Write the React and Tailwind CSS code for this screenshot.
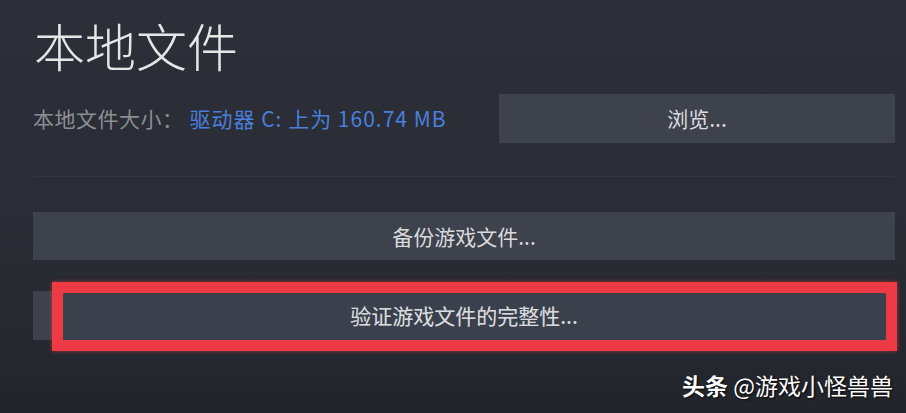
import React from 'react';

const font = { fontFamily: '"Noto Sans CJK SC", "Noto Sans", sans-serif' };

const ActionButton = ({ children, className = '' }) => (
  <div
    className={`flex items-center justify-center bg-[#3e424c] text-[21px] text-[#d9dadd] leading-none ${className}`}
  >
    {children}
  </div>
);

const App = () => {
  return (
    <div
      className="relative h-[413px] w-[906px] overflow-hidden bg-gradient-to-b from-[#2c2f38] via-[#2a2d35] to-[#23252c] pl-[33px] pr-[11px]"
      style={font}
    >
      {/* title */}
      <h1 className="pt-[20px] pl-[1px] text-[51px] font-light leading-none text-[#e6e6e6]">
        本地文件
      </h1>

      {/* size row */}
      <div className="mt-[23px] flex items-center">
        <span className="text-[21px] leading-none tracking-[0.5px] text-[#8b8e94]">本地文件大小：</span>
        <span className="ml-[6px] text-[21px] leading-none tracking-[1px] text-[#4a7fdc]">
          驱动器 C: 上为 160.74 MB
        </span>
        <ActionButton className="ml-auto h-[49px] w-[396px]">浏览...</ActionButton>
      </div>

      {/* divider */}
      <div className="mt-[33px] h-px bg-white/[0.04]" />

      <ActionButton className="mt-[35px] h-[48px]">备份游戏文件...</ActionButton>

      <div className="relative mt-[31px]">
        <ActionButton className="h-[49px]">验证游戏文件的完整性...</ActionButton>
        {/* red highlight annotation */}
        <div className="absolute -top-[9px] -bottom-[11px] left-[19px] -right-[2px] border-[11px] border-[#ee3a44] bg-[#39404c]/60 shadow-[0_0_4px_rgba(238,58,68,0.6)]" />
        <div className="absolute inset-0 flex items-center justify-center text-[21px] leading-none text-[#d9dadd]">
          验证游戏文件的完整性...
        </div>
      </div>

      {/* watermark */}
      <div className="absolute right-[13px] top-[374px] text-[23px] leading-none text-white [text-shadow:1px_1px_2px_rgba(0,0,0,0.9)]">
        <span className="font-bold">头条</span> @游戏小怪兽兽
      </div>
    </div>
  );
};

export default App;
